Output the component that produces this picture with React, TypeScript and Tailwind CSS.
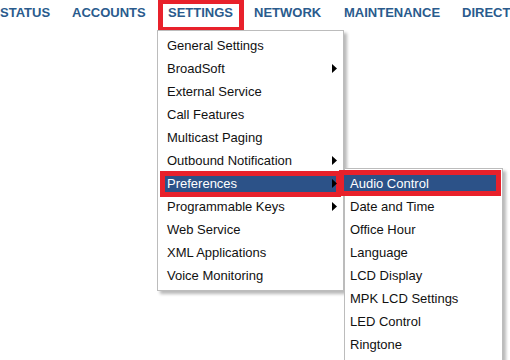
import React from "react";

const navItems = [
  { label: "STATUS", w: "w-[72px]" },
  { label: "ACCOUNTS", w: "w-[96px]" },
  { label: "SETTINGS", w: "w-[86px]" },
  { label: "NETWORK", w: "w-[90px]" },
  { label: "MAINTENANCE", w: "w-[118px]" },
  { label: "DIRECTORY", w: "w-[120px]" },
];

const settingsMenu = [
  { label: "General Settings" },
  { label: "BroadSoft", sub: true },
  { label: "External Service" },
  { label: "Call Features" },
  { label: "Multicast Paging" },
  { label: "Outbound Notification", sub: true },
  { label: "Preferences", sub: true, active: true },
  { label: "Programmable Keys", sub: true },
  { label: "Web Service" },
  { label: "XML Applications" },
  { label: "Voice Monitoring" },
];

const prefsMenu = [
  "Audio Control",
  "Date and Time",
  "Office Hour",
  "Language",
  "LCD Display",
  "MPK LCD Settings",
  "LED Control",
  "Ringtone",
];

function Arrow() {
  return (
    <svg width="5" height="9" viewBox="0 0 5 9" className="relative z-10">
      <path d="M0 0 L5 4.5 L0 9 Z" fill="#000" />
    </svg>
  );
}

export default function App() {
  return (
    <div className="relative h-[360px] w-[510px] overflow-hidden bg-white font-['Liberation_Sans',Arial,sans-serif]">
      {/* top nav */}
      <nav className="flex whitespace-nowrap pt-[5px] text-[13px] font-bold leading-[15px] text-[#2a5b8d]">
        {navItems.map((item) => (
          <div key={item.label} className={`relative shrink-0 ${item.w}`}>
            {item.label === "SETTINGS" && (
              <span className="absolute -top-[6px] -bottom-[12px] -left-[10px] right-[10px] border-[5px] border-[#e8212b]" />
            )}
            <span className="relative">{item.label}</span>
          </div>
        ))}
      </nav>

      {/* settings dropdown */}
      <div className="absolute left-[157px] top-[30px] w-[187px] border border-[#bcbcbc] bg-white py-[3px] text-[13px] text-[#111] shadow-[3px_3px_3px_rgba(0,0,0,0.28)]">
        {settingsMenu.map((item) => (
          <div
            key={item.label}
            className={`relative flex h-[23px] items-center justify-between pl-[9px] pr-[6px] ${
              item.active ? "text-white" : ""
            }`}
          >
            {item.active && (
              <span className="absolute -top-[1px] -bottom-[2px] left-[2px] right-[2px] border-[5px] border-[#e8212b] bg-[#2c5288]" />
            )}
            <span className="relative z-10">{item.label}</span>
            {item.sub && <Arrow />}
          </div>
        ))}
      </div>

      {/* preferences submenu */}
      <div className="absolute left-[344px] top-[168px] w-[159px] border border-[#bcbcbc] bg-white pt-[3px] pb-[30px] text-[13px] text-[#111] shadow-[3px_3px_3px_rgba(0,0,0,0.28)]">
        {prefsMenu.map((label, i) => (
          <div
            key={label}
            className={`relative flex h-[23px] items-center pl-[5px] ${i === 0 ? "text-white" : ""}`}
          >
            {i === 0 && (
              <span className="absolute -top-[2px] -bottom-[1px] -left-[6px] right-[1px] border-[5px] border-[#e8212b] bg-[#2c5288]" />
            )}
            <span className="relative z-10">{label}</span>
          </div>
        ))}
      </div>
    </div>
  );
}
